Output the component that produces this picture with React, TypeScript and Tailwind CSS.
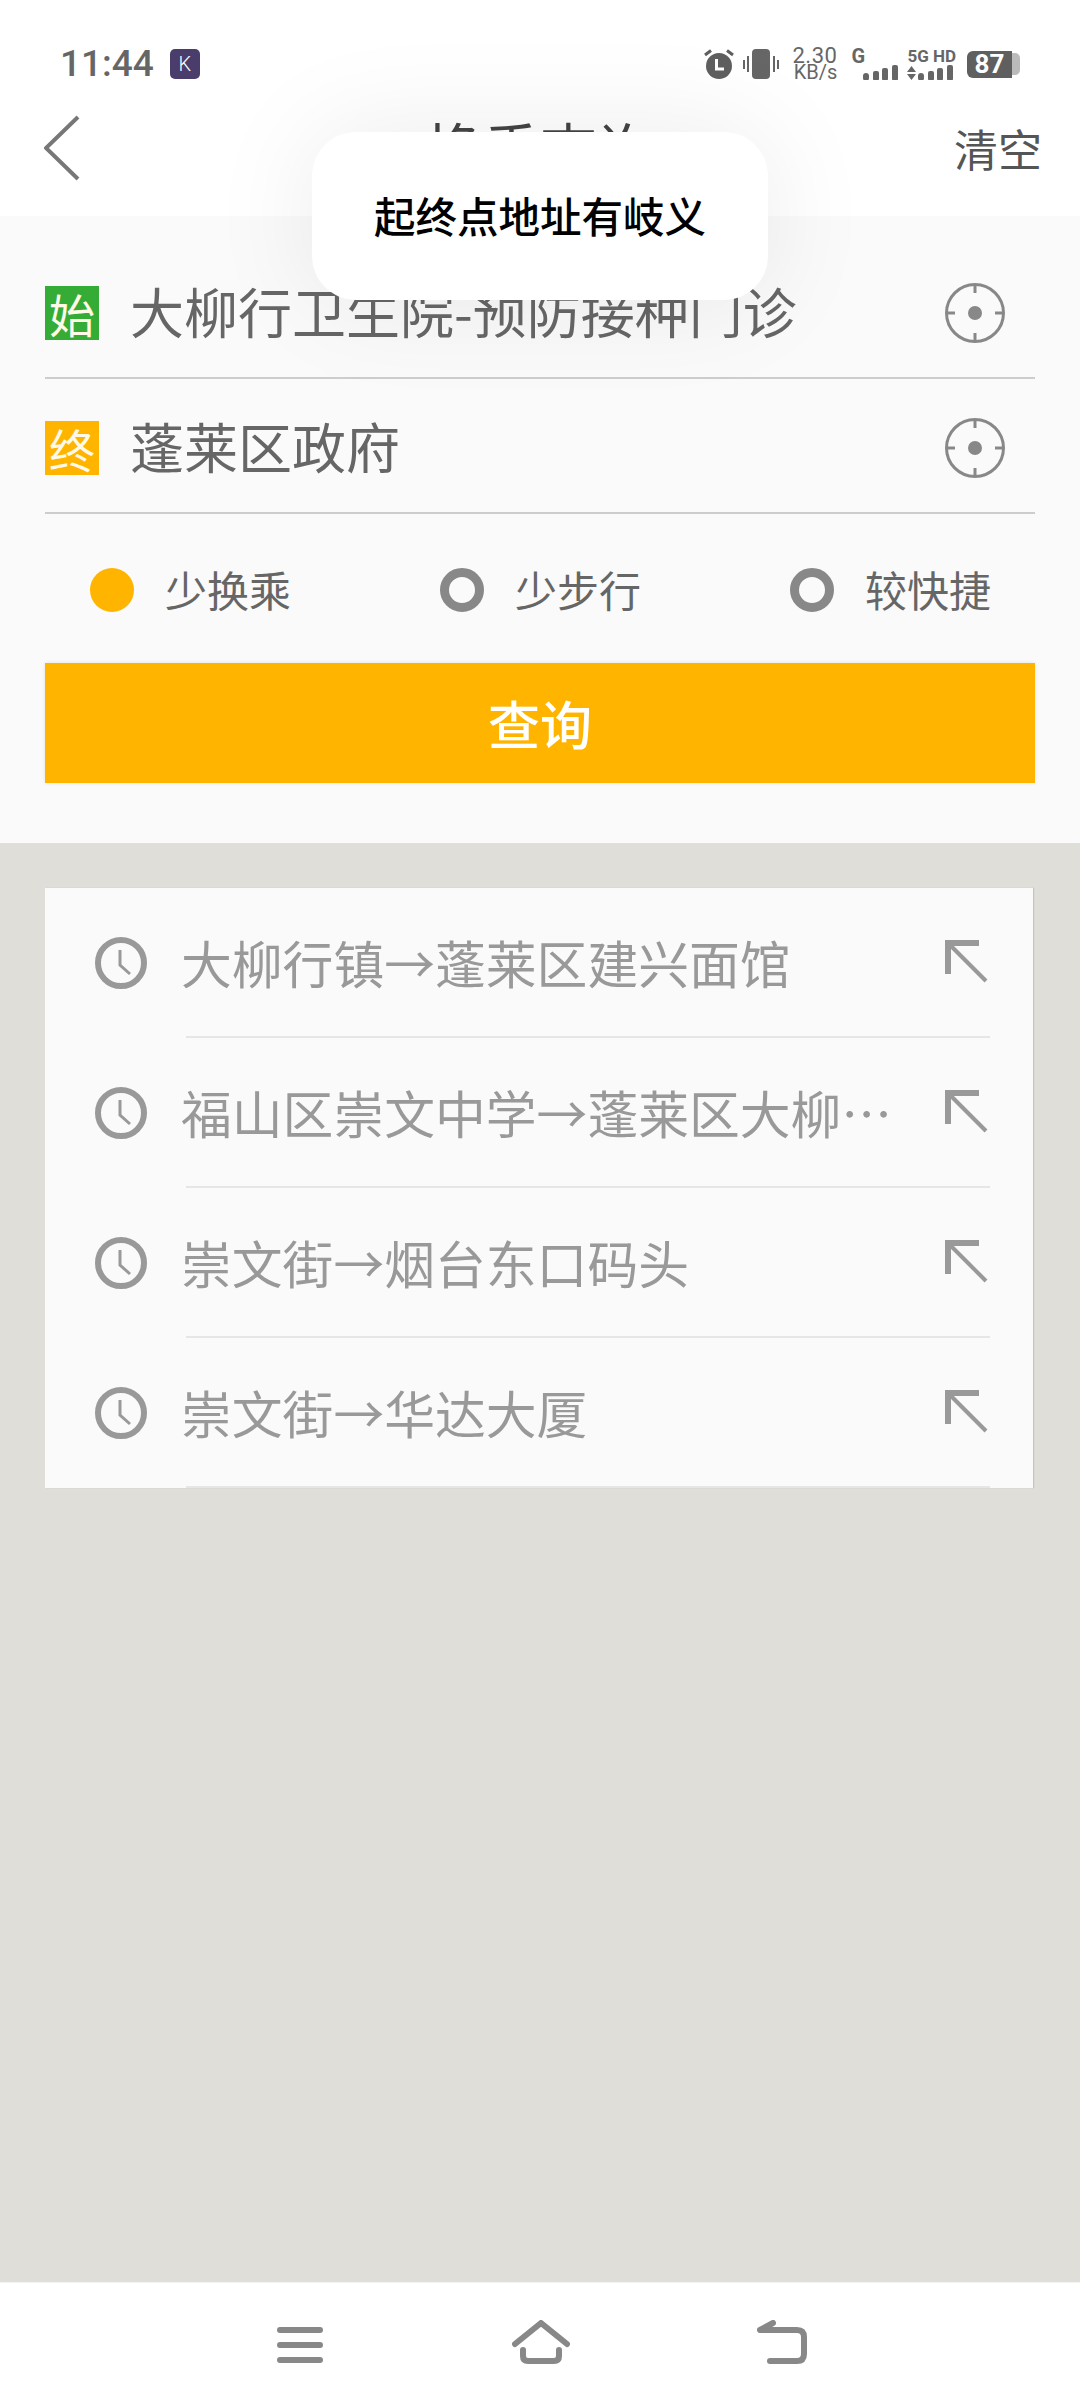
import type { ReactNode } from 'react';

const history = [
    '大柳行镇→蓬莱区建兴面馆',
    '福山区崇文中学→蓬莱区大柳…',
    '崇文街→烟台东口码头',
    '崇文街→华达大厦',
];

function SignalBars({ arrows = false }: { arrows?: boolean }) {
    return (
        <svg width={arrows ? 46 : 35} height="16" viewBox={arrows ? '0 0 46 16' : '0 0 35 16'} fill="#666">
            {arrows && <path d="M0 7 L4.5 1 L9 7 Z M0 9 L9 9 L4.5 15 Z" />}
            <g transform={arrows ? 'translate(11 0)' : undefined}>
                <rect x="0" y="8" width="6" height="8" rx="3" />
                <rect x="10" y="6" width="6" height="10" rx="2" />
                <rect x="19" y="3" width="6" height="13" rx="2" />
                <rect x="29" y="0" width="6" height="16" rx="2" />
            </g>
        </svg>
    );
}

function StatusBar() {
    return (
        <div className="h-[80px] pt-[47px] pl-[60px] pr-[60px] flex justify-between items-start">
            <div className="flex items-center h-[34px]">
                <span className="font-['Roboto',sans-serif] font-medium text-[37px] leading-[34px] text-[#666]">
                    11:44
                </span>
                <div className="ml-[16px] w-[30px] h-[30px] rounded-[5px] bg-[#4a3c6b] flex items-center justify-center">
                    <span className="font-['Roboto',sans-serif] font-light text-[20px] leading-none text-white">K</span>
                </div>
            </div>
            <div className="flex items-center h-[34px]">
                <svg width="32" height="30" viewBox="0 0 32 30">
                    <circle cx="16" cy="17" r="13" fill="#5f5f5f" />
                    <path d="M2 6 L8 1.5 M30 6 L24 1.5" stroke="#5f5f5f" strokeWidth="3" />
                    <path d="M13.5 10 V20 H21" stroke="#fff" strokeWidth="3" fill="none" />
                </svg>
                <svg className="ml-[8px]" width="36" height="30" viewBox="0 0 36 30" fill="#666">
                    <rect x="9" y="0" width="18" height="30" rx="4" />
                    <rect x="0" y="11" width="2" height="9" />
                    <rect x="4" y="7" width="2" height="16" />
                    <rect x="30" y="7" width="2" height="16" />
                    <rect x="34" y="11" width="2" height="9" />
                </svg>
                <div className="ml-[13px] flex flex-col items-end font-['Roboto',sans-serif] text-[#666]">
                    <span className="text-[22px] leading-[17px] tracking-[0.5px]">2.30</span>
                    <span className="text-[20px] leading-[17px]">KB/s</span>
                </div>
                <div className="ml-[14px] w-[47px] flex flex-col items-stretch font-['Roboto',sans-serif] text-[#666]">
                    <span className="text-[20px] leading-[18px] font-bold h-[18px]">G</span>
                    <div className="flex justify-end">
                        <SignalBars />
                    </div>
                </div>
                <div className="ml-[9px] flex flex-col font-['Roboto',sans-serif] text-[#666]">
                    <span className="text-[17px] leading-[18px] font-bold h-[18px] whitespace-nowrap">5G HD</span>
                    <SignalBars arrows />
                </div>
                <div className="ml-[11px] flex items-center">
                    <div className="w-[45px] h-[27px] bg-[#5f5f5f] rounded-l-[6px] flex items-center justify-center">
                        <span className="font-['Roboto',sans-serif] font-bold text-[26px] leading-none text-white">87</span>
                    </div>
                    <div className="w-[8px] h-[22px] bg-[#bbb] rounded-r-[5px]" />
                </div>
            </div>
        </div>
    );
}

function Header() {
    return (
        <div className="h-[136px] bg-white flex items-center justify-between relative">
            <svg className="ml-[44px]" width="36" height="66" viewBox="0 0 36 66" fill="none" stroke="#777" strokeWidth="4">
                <path d="M34 2 L2 33 L34 64" />
            </svg>
            <span className="absolute left-0 right-0 top-[26px] text-center text-[57px] leading-[80px] text-[#444]">
                换乘查询
            </span>
            <span className="mr-[38px] text-[44px] leading-none text-[#555]">清空</span>
        </div>
    );
}

function TargetIcon() {
    return (
        <svg width="60" height="60" viewBox="0 0 60 60" fill="none" stroke="#888" strokeWidth="3">
            <circle cx="30" cy="30" r="28.5" />
            <path d="M30 1 V10 M30 50 V59 M1 30 H10 M50 30 H59" />
            <circle cx="30" cy="30" r="7" fill="#888" stroke="none" />
        </svg>
    );
}

function AddressRow({ badge, badgeClass, children }: { badge: string; badgeClass: string; children: ReactNode }) {
    return (
        <div className="h-[135px] pt-[4px] mx-[45px] border-b-2 border-[#cdcdcd] flex items-center">
            <div className={`w-[54px] h-[54px] flex items-center justify-center text-[46px] leading-none text-[#fff9e8] ${badgeClass}`}>
                {badge}
            </div>
            <span className="ml-[31px] mb-[3px] flex-1 text-[54px] leading-none text-[#666] whitespace-nowrap">{children}</span>
            <div className="mr-[30px]">
                <TargetIcon />
            </div>
        </div>
    );
}

function RadioOption({ label, active = false }: { label: string; active?: boolean }) {
    return (
        <div className="w-[350px] last:w-auto flex items-center">
            {active ? (
                <div className="w-[44px] h-[44px] rounded-full bg-[#ffb400]" />
            ) : (
                <div className="w-[44px] h-[44px] rounded-full border-[9px] border-[#888] bg-[#fafafa]" />
            )}
            <span className="ml-[31px] mb-[2px] text-[42px] leading-none text-[#666]">{label}</span>
        </div>
    );
}

function SearchForm() {
    return (
        <div className="bg-[#fafafa] pt-[28px] pb-[60px]">
            <AddressRow badge="始" badgeClass="bg-[#35ac36]">
                大柳行卫生院-预防接种门诊
            </AddressRow>
            <AddressRow badge="终" badgeClass="bg-[#ffb400]">
                蓬莱区政府
            </AddressRow>
            <div className="pt-[54px] pl-[90px] flex">
                <RadioOption label="少换乘" active />
                <RadioOption label="少步行" />
                <RadioOption label="较快捷" />
            </div>
            <button className="block mt-[51px] ml-[45px] w-[990px] h-[120px] bg-[#ffb400] shadow-[0_0_4px_rgba(0,0,0,0.1)] text-[52px] font-medium leading-none text-white">
                查询
            </button>
        </div>
    );
}

function HistoryRow({ text }: { text: string }) {
    return (
        <div>
            <div className="h-[148px] flex items-center">
                <svg className="ml-[50px] mt-[2px]" width="52" height="52" viewBox="0 0 52 52" fill="none" stroke="#999">
                    <circle cx="26" cy="26" r="23" strokeWidth="6" />
                    <path d="M25 13 V28 L35 37" strokeWidth="3" />
                </svg>
                <span className="ml-[34px] flex-1 text-[50.8px] leading-none text-[#999] whitespace-nowrap">{text}</span>
                <svg className="mr-[44px]" width="44" height="44" viewBox="0 0 44 44" fill="none" stroke="#999">
                    <path d="M34 3 H3 V34" strokeWidth="6" />
                    <path d="M5 5 L41 41" strokeWidth="4" />
                </svg>
            </div>
            <div className="ml-[141px] mr-[43px] h-[2px] bg-[#e6e6e6]" />
        </div>
    );
}

function NavBar() {
    return (
        <div className="h-[126px] bg-white border-t border-[#f4f4f4] pt-[37px] pl-[277px] flex items-start">
            <svg width="46" height="44" viewBox="0 0 46 44" fill="none" stroke="#888" strokeWidth="6" strokeLinecap="round">
                <path d="M3 10 H43 M3 25 H43 M3 40 H43" />
            </svg>
            <svg className="ml-[189px]" width="58" height="44" viewBox="0 0 58 44" fill="none" stroke="#888" strokeWidth="6" strokeLinecap="round" strokeLinejoin="round">
                <path d="M3 24 L29 3 L55 24" />
                <path d="M11 30 V36 Q11 41 16 41 H42 Q47 41 47 36 V30" />
            </svg>
            <svg className="ml-[187px]" width="50" height="44" viewBox="0 0 50 44" fill="none" stroke="#888" strokeWidth="6" strokeLinecap="round" strokeLinejoin="round">
                <path d="M16 3 L3 10 H40 Q47 10 47 17 V34 Q47 41 40 41 H13" />
            </svg>
        </div>
    );
}

export default function App() {
    return (
        <div className="relative w-[1080px] h-[2408px] flex flex-col overflow-hidden bg-white font-['Noto_Sans_CJK_SC',sans-serif]">
            <StatusBar />
            <Header />
            <SearchForm />
            <div className="flex-1 bg-[#e0ded9] pt-[45px]">
                <div className="ml-[45px] w-[988px] bg-[#fafafa] shadow-[1px_0_1px_rgba(0,0,0,0.12)]">
                    {history.map((text) => (
                        <HistoryRow key={text} text={text} />
                    ))}
                </div>
            </div>
            <NavBar />
            <div className="absolute left-[312px] top-[132px] w-[456px] h-[168px] rounded-[44px] bg-white shadow-[0_0_110px_rgba(0,0,0,0.08)] flex items-center justify-center">
                <span className="text-[41.5px] font-medium leading-none text-black">起终点地址有岐义</span>
            </div>
        </div>
    );
}
